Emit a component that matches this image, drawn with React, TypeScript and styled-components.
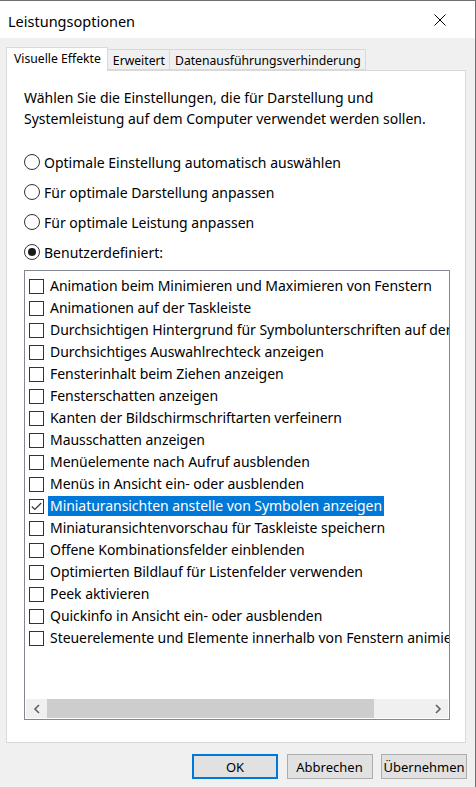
import React from "react";
import styled, { createGlobalStyle } from "styled-components";

const GlobalStyle = createGlobalStyle`
  html, body { margin: 0; padding: 0; background: #f0f0f0; }
  * { box-sizing: border-box; }
`;

const FONT = `"Segoe UI", "Noto Sans", "Open Sans", sans-serif`;

const Window = styled.div`
  width: 476px;
  height: 787px;
  background: #f0f0f0;
  border-top: 1px solid #6f6f6f;
  border-right: 1px solid #6f6f6f;
  font-family: ${FONT};
  font-size: 14px;
  color: #000;
  display: flex;
  flex-direction: column;
  overflow: hidden;
`;

const TitleBar = styled.div`
  height: 37px;
  background: #fff;
  display: flex;
  align-items: center;
  justify-content: space-between;
  padding: 0 29px 0 8px;
  flex-shrink: 0;
`;

const Title = styled.span`
  font-size: 14.5px;
  padding-top: 2px;
`;

const Body = styled.div`
  flex: 1;
  display: flex;
  flex-direction: column;
  padding: 9px 10px 0 6px;
`;

const TabStrip = styled.div`
  display: flex;
  align-items: flex-end;
  height: 23px;
  position: relative;
  z-index: 1;
`;

const Tab = styled.div<{ $active?: boolean }>`
  height: ${(p) => (p.$active ? "24px" : "21px")};
  margin-bottom: ${(p) => (p.$active ? "-1px" : "0")};
  background: ${(p) => (p.$active ? "#fff" : "#f0f0f0")};
  border: 1px solid #d9d9d9;
  border-bottom: ${(p) => (p.$active ? "none" : "1px solid #d9d9d9")};
  border-left: ${(p) => (p.$active ? "1px solid #d9d9d9" : "none")};
  padding: ${(p) => (p.$active ? "2px 6px 0 7px" : "1px 4px 0 5px")};
  font-size: 12.2px;
  white-space: nowrap;
  display: flex;
  align-items: ${(p) => (p.$active ? "flex-start" : "center")};
`;

const Panel = styled.div`
  width: 460px;
  height: 673px;
  background: #fff;
  border: 1px solid #d9d9d9;
  padding: 16px 0 0 17px;
  display: flex;
  flex-direction: column;
`;

const Description = styled.p`
  margin: 0;
  line-height: 21px;
  font-size: 14px;
`;

const RadioGroup = styled.div`
  display: flex;
  flex-direction: column;
  margin-top: 18px;
`;

const RadioRow = styled.label`
  display: flex;
  align-items: center;
  height: 30px;
  gap: 4px;
`;

const RadioCircle = styled.span<{ $checked?: boolean }>`
  width: 16px;
  height: 16px;
  border-radius: 50%;
  border: 1px solid #333;
  background: #fff;
  display: flex;
  align-items: center;
  justify-content: center;
  flex-shrink: 0;
  &::after {
    content: "";
    width: 8px;
    height: 8px;
    border-radius: 50%;
    background: ${(p) => (p.$checked ? "#1a1a1a" : "transparent")};
  }
`;

const ListBox = styled.div`
  margin-top: 3px;
  width: 426px;
  height: 450px;
  border: 1px solid #828790;
  display: flex;
  flex-direction: column;
  background: #fff;
`;

const Items = styled.div`
  flex: 1;
  overflow: hidden;
  padding: 4px 0 0 4px;
  display: flex;
  flex-direction: column;
`;

const Item = styled.div`
  display: flex;
  align-items: center;
  height: 22px;
  white-space: nowrap;
`;

const CheckBox = styled.span`
  width: 15px;
  height: 15px;
  border: 1px solid #333;
  background: #fff;
  flex-shrink: 0;
  display: flex;
  align-items: center;
  justify-content: center;
  margin-right: 4px;
`;

const ItemLabel = styled.span<{ $selected?: boolean }>`
  background: ${(p) => (p.$selected ? "#0078d7" : "transparent")};
  color: ${(p) => (p.$selected ? "#fff" : "#000")};
  height: 20px;
  line-height: 20px;
  padding: 0 2px;
  letter-spacing: -0.05px;
`;

const HScroll = styled.div`
  height: 19px;
  margin: 0 1px 1px 1px;
  background: #f0f0f0;
  display: flex;
  align-items: stretch;
`;

const ArrowBtn = styled.div`
  width: 21px;
  display: flex;
  align-items: center;
  justify-content: center;
  flex-shrink: 0;
`;

const Track = styled.div`
  flex: 1;
  display: flex;
`;

const Thumb = styled.div`
  background: #cdcdcd;
`;

const ButtonRow = styled.div`
  display: flex;
  justify-content: flex-end;
  gap: 8.5px;
  padding: 11px 0 0 0;
  margin-right: -2px;
`;

const Button = styled.button<{ $default?: boolean }>`
  width: 86px;
  height: 25px;
  font-family: ${FONT};
  font-size: 13px;
  color: #000;
  background: #e1e1e1;
  border: ${(p) => (p.$default ? "2px solid #0078d7" : "1px solid #adadad")};
  padding: 0;
  margin: 0;
  white-space: nowrap;
`;

const radios = [
  { label: "Optimale Einstellung automatisch auswählen", checked: false },
  { label: "Für optimale Darstellung anpassen", checked: false },
  { label: "Für optimale Leistung anpassen", checked: false },
  { label: "Benutzerdefiniert:", checked: true },
];

const items = [
  "Animation beim Minimieren und Maximieren von Fenstern",
  "Animationen auf der Taskleiste",
  "Durchsichtigen Hintergrund für Symbolunterschriften auf dem Desktop",
  "Durchsichtiges Auswahlrechteck anzeigen",
  "Fensterinhalt beim Ziehen anzeigen",
  "Fensterschatten anzeigen",
  "Kanten der Bildschirmschriftarten verfeinern",
  "Mausschatten anzeigen",
  "Menüelemente nach Aufruf ausblenden",
  "Menüs in Ansicht ein- oder ausblenden",
  "Miniaturansichten anstelle von Symbolen anzeigen",
  "Miniaturansichtenvorschau für Taskleiste speichern",
  "Offene Kombinationsfelder einblenden",
  "Optimierten Bildlauf für Listenfelder verwenden",
  "Peek aktivieren",
  "Quickinfo in Ansicht ein- oder ausblenden",
  "Steuerelemente und Elemente innerhalb von Fenstern animieren",
];

const CHECKED = 10;

export default function App() {
  return (
    <>
      <GlobalStyle />
      <Window>
        <TitleBar>
          <Title>Leistungsoptionen</Title>
          <svg width="12" height="12" viewBox="0 0 12 12">
            <path d="M0.5 0.5 L11.5 11.5 M11.5 0.5 L0.5 11.5" stroke="#000" strokeWidth="1" fill="none" />
          </svg>
        </TitleBar>
        <Body>
          <TabStrip>
            <Tab $active>Visuelle Effekte</Tab>
            <Tab>Erweitert</Tab>
            <Tab>Datenausführungsverhinderung</Tab>
          </TabStrip>
          <Panel>
            <Description>
              Wählen Sie die Einstellungen, die für Darstellung und
              <br />
              Systemleistung auf dem Computer verwendet werden sollen.
            </Description>
            <RadioGroup>
              {radios.map((r) => (
                <RadioRow key={r.label}>
                  <RadioCircle $checked={r.checked} />
                  {r.label}
                </RadioRow>
              ))}
            </RadioGroup>
            <ListBox>
              <Items>
                {items.map((t, i) => (
                  <Item key={t}>
                    <CheckBox>
                      {i === CHECKED && (
                        <svg width="11" height="9" viewBox="0 0 11 9">
                          <path d="M0.8 4.5 L3.8 7.5 L10.2 1" stroke="#333" strokeWidth="1.1" fill="none" />
                        </svg>
                      )}
                    </CheckBox>
                    <ItemLabel $selected={i === CHECKED}>{t}</ItemLabel>
                  </Item>
                ))}
              </Items>
              <HScroll>
                <ArrowBtn>
                  <svg width="8" height="10" viewBox="0 0 8 10">
                    <path d="M6 1 L2 5 L6 9" stroke="#606060" strokeWidth="1.6" fill="none" />
                  </svg>
                </ArrowBtn>
                <Track>
                  <Thumb style={{ width: "327px" }} />
                </Track>
                <ArrowBtn>
                  <svg width="8" height="10" viewBox="0 0 8 10">
                    <path d="M2 1 L6 5 L2 9" stroke="#606060" strokeWidth="1.6" fill="none" />
                  </svg>
                </ArrowBtn>
              </HScroll>
            </ListBox>
          </Panel>
          <ButtonRow>
            <Button $default>OK</Button>
            <Button>Abbrechen</Button>
            <Button>Übernehmen</Button>
          </ButtonRow>
        </Body>
      </Window>
    </>
  );
}
